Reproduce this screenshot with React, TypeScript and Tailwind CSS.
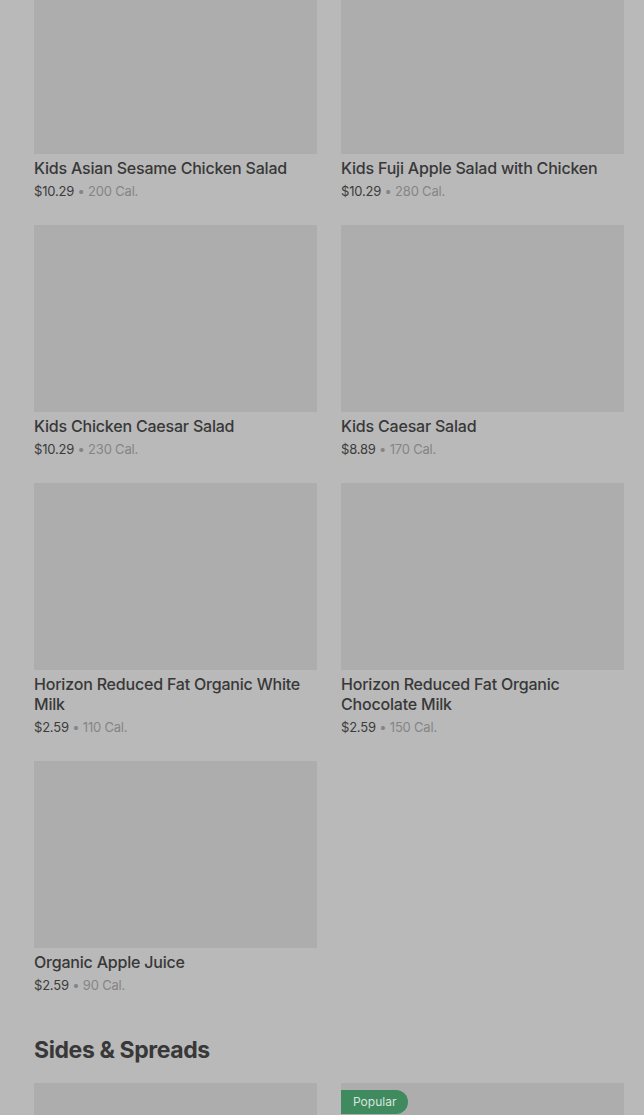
import React from 'react'

type Item = {
  name: string
  price: string
  cal: string
  popular?: boolean
}

const kids: Item[] = [
  { name: 'Kids Asian Sesame Chicken Salad', price: '$10.29', cal: '200 Cal.' },
  { name: 'Kids Fuji Apple Salad with Chicken', price: '$10.29', cal: '280 Cal.' },
  { name: 'Kids Chicken Caesar Salad', price: '$10.29', cal: '230 Cal.' },
  { name: 'Kids Caesar Salad', price: '$8.89', cal: '170 Cal.' },
  { name: 'Horizon Reduced Fat Organic White Milk', price: '$2.59', cal: '110 Cal.' },
  { name: 'Horizon Reduced Fat Organic Chocolate Milk', price: '$2.59', cal: '150 Cal.' },
  { name: 'Organic Apple Juice', price: '$2.59', cal: '90 Cal.' },
]

const sides: Item[] = [
  { name: 'Side', price: '', cal: '' },
  { name: 'Side', price: '', cal: '', popular: true },
]

function MenuCard({ item, imageOnly }: { item: Item; imageOnly?: boolean }) {
  return (
    <div className="flex flex-col">
      <div className="relative h-[187px] bg-[#adadad]">
        {item.popular && (
          <span className="absolute left-0 top-[7px] h-[24px] px-[12px] flex items-center rounded-tl-[4px] rounded-bl-[4px] rounded-r-full bg-[#3f8a5f] text-[12px] text-[#d9e6dd]">
            Popular
          </span>
        )}
      </div>
      {!imageOnly && (
        <>
          <div className="mt-[4px] text-[16px] leading-[20px] font-medium tracking-[-0.2px] text-[#383838]">
            {item.name}
          </div>
          <div className="mt-[3px] text-[13px] leading-[20px] tracking-[-0.2px] text-[#3c3c3c]">
            {item.price}
            <span className="text-[#858585]"> • {item.cal}</span>
          </div>
        </>
      )}
    </div>
  )
}

export default function App() {
  return (
    <div
      className="h-[1115px] overflow-hidden bg-[#b9b9b9] pl-[34px] pr-[20px]"
      style={{ fontFamily: 'Inter, "Noto Sans", sans-serif' }}
    >
      {/* Kids */}
      <div className="-mt-[33px] grid grid-cols-2 gap-x-[24px] gap-y-[24px] items-start">
        {kids.map((item) => (
          <MenuCard key={item.name} item={item} />
        ))}
      </div>

      {/* Sides & Spreads */}
      <h2 className="mt-[39px] text-[23px] leading-[32px] font-bold text-[#383838] tracking-[-0.4px]">
        Sides &amp; Spreads
      </h2>
      <div className="mt-[17px] grid grid-cols-2 gap-x-[24px]">
        {sides.map((item, i) => (
          <MenuCard key={i} item={item} imageOnly />
        ))}
      </div>
    </div>
  )
}
